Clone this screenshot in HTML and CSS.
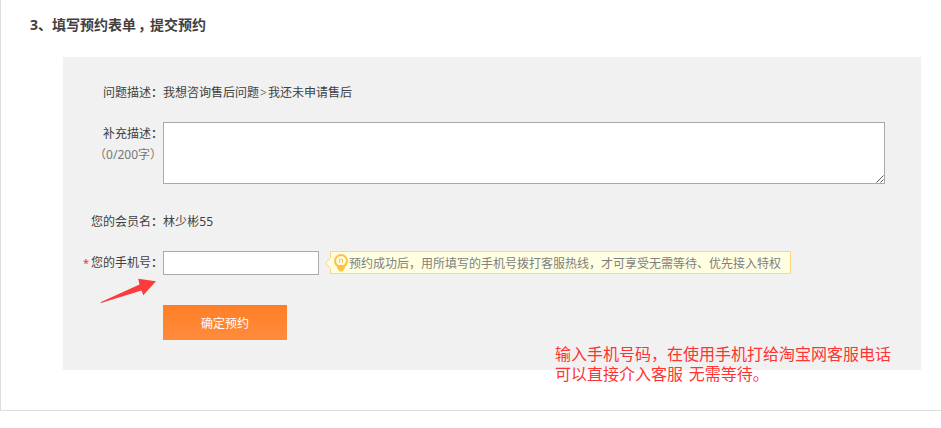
FILE: index.html
```html
<!DOCTYPE html>
<html lang="zh-CN">
<head>
<meta charset="utf-8">
<title>提交预约</title>
<link rel="stylesheet" href="styles.css">
</head>
<body>
<section class="step">
  <h2 class="step-title">3、填写预约表单<span class="comma">，</span>提交预约</h2>
  <form class="panel">
    <div class="row">
      <span class="label">问题描述<span class="colon">：</span></span>
      <span>我想咨询售后问题<span class="sep">&gt;</span>我还未申请售后</span>
    </div>
    <div class="row row-desc">
      <label class="label" for="desc">补充描述<span class="colon">：</span><span class="count">（0/200字）</span></label>
      <div class="area">
        <textarea id="desc"></textarea>
        <svg class="grip" width="8" height="8" viewBox="0 0 8 8"><path d="M0.5 7.5L7.5 .5M4.5 7.5L7.5 4.5"/></svg>
      </div>
    </div>
    <div class="row row-member">
      <span class="label">您的会员名<span class="colon">：</span></span>
      <span class="member">林少彬55</span>
    </div>
    <div class="row row-phone">
      <label class="label" for="phone"><span class="req">*</span>您的手机号<span class="colon">：</span></label>
      <input id="phone" type="text">
      <div class="tip">
        <svg class="tip-arrow" width="6" height="12" viewBox="0 0 6 12"><path class="fill" d="M6 0L1 6L6 12Z"/><path class="edge" d="M5.5 .5L.8 6L5.5 11.5"/></svg>
        <svg class="bulb" width="14" height="18" viewBox="0 0 14 18"><path class="glass" d="M4 12.2C2.3 11 1 9 1 6.8A6 5.8 0 0 1 13 6.8C13 9 11.7 11 10 12.2Z"/><path class="base" d="M2.5 11H11.5L10.5 14.5L8.5 17.4H5.5L3.5 14.5Z"/><path class="wire" d="M5.5 9V5.5H8.5V9"/></svg>
        <span>预约成功后，用所填写的手机号拨打客服热线，才可享受无需等待、优先接入特权</span>
      </div>
    </div>
    <button class="submit" type="button">确定预约</button>
    <svg class="pointer" width="58" height="26" viewBox="0 0 58 26"><path d="M.5 24.3L39.5 6.5L38.2 .7L56 3.2L43.3 17.2L41.5 12.6L1 25Z"/></svg>
    <p class="note">输入手机号码，在使用手机打给淘宝网客服电话<br>可以直接介入客服 无需等待。</p>
  </form>
</section>
</body>
</html>
```
FILE: styles.css
```css
* { box-sizing: border-box; }
body {
  margin: 0;
  background: #fff;
  color: #404040;
  font: 12px/20px "Noto Sans", "Noto Sans CJK SC", sans-serif;
}
.step {
  height: 411px;
  padding: 15px 20px 0 28px;
  border-left: 1px solid #ddd;
  border-bottom: 1px solid #ddd;
}
.step-title {
  margin: 0 0 22px;
  padding-left: 1px;
  font-size: 14px;
  line-height: 20px;
  white-space: nowrap;
}
.comma {
  display: inline-block;
  width: 14px;
  font-family: "Noto Sans CJK SC", sans-serif;
  line-height: 16px;
  text-indent: 2px;
}
.panel {
  position: relative;
  height: 313px;
  margin-left: 34px;
  padding-top: 26px;
  background: #f1f1f1;
}
.row { display: flex; white-space: nowrap; }
.label { flex: none; width: 100px; text-align: right; }
.colon { display: inline-block; width: 12px; text-align: left; font-weight: 500; }
.sep { display: inline-block; width: 9px; color: #777; text-align: center; }
.row-desc { margin-top: 19px; line-height: 21px; }
.row-desc .label { padding-top: 1px; }
.count { display: block; padding-right: 1px; color: #777; }
.area { position: relative; width: 722px; height: 62px; }
textarea, input {
  display: block;
  margin: 0;
  border: 1px solid #aaa;
  border-radius: 0;
  background: #fff;
  font: inherit;
  outline: 0;
}
textarea { width: 100%; height: 100%; resize: none; }
.grip { position: absolute; right: 1px; bottom: 1px; fill: none; stroke: #555; stroke-width: 1; }
.row-member { margin-top: 28px; }
.member { letter-spacing: 0.1px; }
.row-phone { margin-top: 19px; height: 24px; line-height: 22px; }
.row-phone .label { padding-top: 1px; }
.row-phone input { width: 156px; height: 24px; }
.req { margin-right: 2px; color: #e33; font-size: 11px; }
.tip {
  position: relative;
  display: flex;
  gap: 1px;
  width: 461px;
  height: 23px;
  margin-left: 11px;
  padding-left: 3px;
  border: 1px solid #ffd57f;
  background: #fffee0;
  color: #808080;
  line-height: 23px;
}
.tip-arrow { position: absolute; left: -6px; top: 5px; }
.tip-arrow .fill { fill: #fffee0; }
.tip-arrow .edge { fill: none; stroke: #ffd57f; }
.bulb { flex: none; margin-top: 2px; }
.bulb .glass { fill: #fffbe0; stroke: #ffc247; stroke-width: 2; }
.bulb .base { fill: #ffc247; }
.bulb .wire { fill: none; stroke: #ffc247; stroke-width: 1; }
.submit {
  display: block;
  width: 124px;
  height: 35px;
  margin: 30px 0 0 100px;
  padding: 3px 0 0;
  border: 0;
  background: linear-gradient(#ff7f28, #ff8b3b);
  color: #fff;
  font: inherit;
}
.pointer { position: absolute; left: 37px; top: 221px; fill: #fc3b3b; }
.note {
  position: absolute;
  left: 492px;
  top: 287px;
  margin: 0;
  color: #ff3333;
  font-size: 16px;
  line-height: 20px;
  word-spacing: 1.5px;
  white-space: nowrap;
}
```
